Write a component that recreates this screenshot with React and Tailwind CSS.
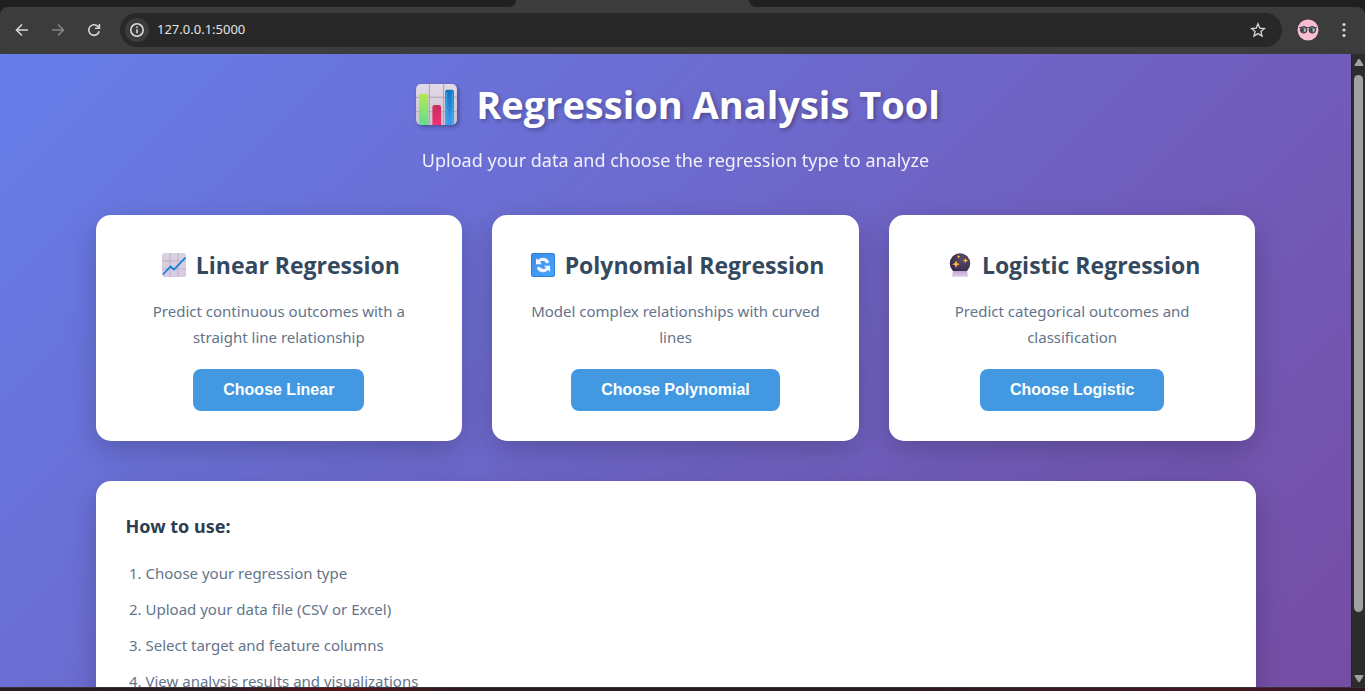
import React from "react";

function BarChartEmoji({ className }) {
  return (
    <svg viewBox="0 0 42 42" className={className} aria-hidden="true">
      <defs>
        <linearGradient id="tile" x1="0" y1="0" x2="0" y2="1">
          <stop offset="0" stopColor="#e2dbe6" />
          <stop offset="1" stopColor="#cdc2d2" />
        </linearGradient>
        <linearGradient id="green" x1="0" y1="0" x2="0" y2="1">
          <stop offset="0" stopColor="#b5e853" />
          <stop offset="1" stopColor="#62dc8c" />
        </linearGradient>
        <linearGradient id="red" x1="0" y1="0" x2="0" y2="1">
          <stop offset="0" stopColor="#c82f5e" />
          <stop offset="1" stopColor="#f52f72" />
        </linearGradient>
        <linearGradient id="blue" x1="0" y1="0" x2="0" y2="1">
          <stop offset="0" stopColor="#0f74c4" />
          <stop offset="1" stopColor="#3f9df0" />
        </linearGradient>
      </defs>
      <rect x="1" y="1" width="40" height="40" rx="5" fill="url(#tile)" />
      <path d="M14 1v40M28 1v40M1 14h40M1 28h40" stroke="#aba2b1" strokeWidth="1" />
      <path d="M4 41V12.500a2 2 0 0 1 2-2h5a2 2 0 0 1 2 2V41z" fill="url(#green)" />
      <path d="M17 41V23.500a2 2 0 0 1 2-2h4.500a2 2 0 0 1 2 2V41z" fill="url(#red)" />
      <path d="M29.500 41V8.500a2 2 0 0 1 2-2H36a2 2 0 0 1 2 2V41z" fill="url(#blue)" />
      <path d="M31 41V9M36.500 41V9" stroke="#48aef5" strokeWidth="0.8" />
    </svg>
  );
}

function TrendEmoji({ className }) {
  return (
    <svg viewBox="0 0 24 24" className={className} aria-hidden="true">
      <defs>
        <linearGradient id="trendTile" x1="0" y1="0" x2="0" y2="1">
          <stop offset="0" stopColor="#d9d2df" />
          <stop offset="1" stopColor="#d9c9e6" />
        </linearGradient>
      </defs>
      <rect width="24" height="24" rx="2.500" fill="url(#trendTile)" />
      <path d="M8 0v24M16 0v24M0 8h24M0 16h24" stroke="#b7abc0" strokeWidth="0.8" />
      <path d="M1 21.500 8.500 13.500l3.500 3L23.500 4.500" fill="none" stroke="#0f7fd6" strokeWidth="1.700" />
    </svg>
  );
}

function CycleEmoji({ className }) {
  return (
    <svg viewBox="0 0 24 24" className={className} aria-hidden="true">
      <defs>
        <linearGradient id="cycleTile" x1="0" y1="0" x2="1" y2="1">
          <stop offset="0" stopColor="#3c8ee8" />
          <stop offset="1" stopColor="#4aa6fb" />
        </linearGradient>
      </defs>
      <rect width="24" height="24" rx="2.500" fill="url(#cycleTile)" />
      <rect x="0.500" y="0.500" width="23" height="23" rx="2.200" fill="none" stroke="#2e7fdb" />
      <path
        d="M5 5.200v6h6L8.900 9.100c1.800-1.600 4.400-1.300 5.700.3.500.7 1.300 1 2 .8 1.200-.3 1.600-1.400 1-2.500C15.300 4 10.100 3.500 7 7.100z"
        fill="#f4f5ff"
      />
      <path
        d="M19 18.800v-6h-6l2.100 2.100c-1.800 1.600-4.400 1.300-5.700-.3-.5-.7-1.300-1-2-.8-1.200.3-1.600 1.400-1 2.500 2.300 3.700 7.500 4.200 10.600.6z"
        fill="#f4f5ff"
      />
    </svg>
  );
}

function CrystalBallEmoji({ className }) {
  return (
    <svg viewBox="0 0 24 24" className={className} aria-hidden="true">
      <defs>
        <radialGradient id="ball" cx="0.6" cy="0.3" r="0.7">
          <stop offset="0" stopColor="#5c4f68" />
          <stop offset="1" stopColor="#35264a" />
        </radialGradient>
        <linearGradient id="stand" x1="0" y1="0" x2="0" y2="1">
          <stop offset="0" stopColor="#b9a4cd" />
          <stop offset="1" stopColor="#e6d3f6" />
        </linearGradient>
      </defs>
      <circle cx="12" cy="10.500" r="10.200" fill="url(#ball)" />
      <path d="M5 18h14l1 5a1 1 0 0 1-1 1H5a1 1 0 0 1-1-1z" fill="url(#stand)" />
      <path
        d="M8 7.500l1.100 2.600 2.600 1.100-2.600 1.100L8 14.900l-1.100-2.600-2.600-1.100 2.600-1.100zM17.500 5l.8 1.800 1.800.8-1.800.8-.8 1.800-.8-1.800-1.800-.8 1.800-.8zM10.700 1.800l.6 1.300 1.300.6-1.300.6-.6 1.300-.6-1.300-1.300-.6 1.300-.6z"
        fill="#fdb43c"
      />
    </svg>
  );
}

function Avatar() {
  return (
    <svg viewBox="0 0 22 22" className="size-[22px]" aria-hidden="true">
      <circle cx="11" cy="11" r="10.500" fill="#f9bdd2" />
      <path d="M2 8.500h18" stroke="#42343a" strokeWidth="0.8" />
      <circle cx="6.700" cy="10.800" r="3.300" fill="#6d868a" stroke="#30272b" strokeWidth="0.9" />
      <circle cx="15.300" cy="10.800" r="3.300" fill="#6d868a" stroke="#30272b" strokeWidth="0.9" />
      <path d="M4 10a3 3 0 0 0 2.500 3.500V8.500zM13 10a3 3 0 0 0 2.300 3.500V8.500z" fill="#33464b" />
      <path d="M7 9.500l2 1.500-1.500 2zM15.800 9.500l2 1.500-1.500 2z" fill="#d8c5cd" />
    </svg>
  );
}

function BrowserBar() {
  return (
    <header className="shrink-0 bg-[#1f2120]">
      <div className="flex h-[7px]" aria-hidden="true">
        <div className="w-[506px]" />
        <div className="flex w-[253px] bg-[#3c3c3c]">
          <div className="w-[10px] rounded-br-[10px] bg-[#1f2120]" />
          <div className="flex-1" />
          <div className="w-[10px] rounded-bl-[10px] bg-[#1f2120]" />
        </div>
      </div>
      <div className="flex h-[47px] items-center rounded-t-lg bg-[#3c3c3c] px-3 pb-px">
        <div className="flex items-center gap-4">
          <button aria-label="Back" className="flex size-5 items-center justify-center text-[#d6d6d6]">
            <svg viewBox="0 0 16 16" className="size-4" fill="none" stroke="currentColor" strokeWidth="1.6">
              <path d="M14 8H3M8 2.500 2.500 8 8 13.500" />
            </svg>
          </button>
          <button aria-label="Forward" className="flex size-5 items-center justify-center text-[#858585]">
            <svg viewBox="0 0 16 16" className="size-4" fill="none" stroke="currentColor" strokeWidth="1.6">
              <path d="M2 8h11M8 2.500 13.500 8 8 13.500" />
            </svg>
          </button>
          <button aria-label="Reload" className="flex size-5 items-center justify-center text-[#d6d6d6]">
            <svg viewBox="0 0 16 16" className="size-4" fill="none" stroke="currentColor" strokeWidth="1.6">
              <path d="M13.200 9.200A5.300 5.300 0 1 1 12 4.500L13.300 6" />
              <path d="M13.400 2v4.300H9.100" />
            </svg>
          </button>
        </div>
        <div className="ml-4 flex h-[34px] flex-1 items-center rounded-full bg-[#282828] pr-4 pl-[5px]">
          <button aria-label="Site information" className="flex size-6 items-center justify-center rounded-full bg-[#3c3c3c] text-[#e0e0e0]">
            <svg viewBox="0 0 16 16" className="size-4" fill="none" stroke="currentColor" strokeWidth="1.5">
              <circle cx="8" cy="8" r="6.200" />
              <path d="M8 7.200v4M8 4.500v1.600" />
            </svg>
          </button>
          <input
            aria-label="Address"
            defaultValue="127.0.0.1:5000"
            className="ml-2 min-w-0 flex-1 bg-transparent font-['Noto_Sans',sans-serif] text-[13px] text-[#e3e3e3] outline-none"
          />
          <button aria-label="Bookmark" className="text-[#d6d6d6]">
            <svg viewBox="0 0 16 16" className="size-4" fill="none" stroke="currentColor" strokeWidth="1.3">
              <path d="M8 1.800l1.800 4.300 4.600.4-3.500 3 1.100 4.600L8 11.600l-4 2.500 1.100-4.600-3.500-3 4.600-.4z" />
            </svg>
          </button>
        </div>
        <button aria-label="Profile" className="ml-[15px]">
          <Avatar />
        </button>
        <button aria-label="Menu" className="ml-4 text-[#d6d6d6]">
          <svg viewBox="0 0 18 18" className="size-[18px]" fill="currentColor">
            <circle cx="9" cy="3.500" r="1.600" />
            <circle cx="9" cy="9" r="1.600" />
            <circle cx="9" cy="14.500" r="1.600" />
          </svg>
        </button>
      </div>
    </header>
  );
}

const options = [
  {
    title: "Linear Regression",
    text: "Predict continuous outcomes with a straight line relationship",
    action: "Choose Linear",
    Icon: TrendEmoji,
  },
  {
    title: "Polynomial Regression",
    text: "Model complex relationships with curved lines",
    action: "Choose Polynomial",
    Icon: CycleEmoji,
  },
  {
    title: "Logistic Regression",
    text: "Predict categorical outcomes and classification",
    action: "Choose Logistic",
    Icon: CrystalBallEmoji,
  },
];

const steps = [
  "Choose your regression type",
  "Upload your data file (CSV or Excel)",
  "Select target and feature columns",
  "View analysis results and visualizations",
];

function OptionCard({ title, text, action, Icon }) {
  return (
    <article className="flex flex-col items-center rounded-[15px] bg-white p-[30px] text-center shadow-[0_10px_30px_rgba(0,0,0,0.2)]">
      <h2 className="flex items-center gap-[10px] pl-1 font-['Open_Sans',sans-serif] text-[23px] leading-10 font-bold whitespace-nowrap text-[#34495e]">
        <Icon className="size-6" />
        {title}
      </h2>
      <p className="mt-[13px] text-[15px] leading-[26px] text-[#64748b]">{text}</p>
      <button className="mt-[19px] h-[42px] rounded-lg bg-[#4299e1] px-[30px] font-['Liberation_Sans',Arial,sans-serif] text-base font-bold text-white">
        {action}
      </button>
    </article>
  );
}

function ScrollBar() {
  return (
    <div className="flex w-[14px] shrink-0 flex-col items-center border-l border-[#1c2a1c] bg-[#2c2c2c] py-1" aria-hidden="true">
      <svg viewBox="0 0 10 9" className="h-[9px] w-[10px]" fill="#a0a0a0">
        <path d="M4 1.500a1.200 1.200 0 0 1 2 0L9.500 7Q9.700 8 8.700 8H1.300Q.3 8 .5 7z" />
      </svg>
      <div className="mt-2 flex flex-1 flex-col pb-[62px]">
        <div className="w-[9px] flex-1 rounded-full bg-[#a0a0a0]" />
      </div>
      <svg viewBox="0 0 10 9" className="h-[9px] w-[10px]" fill="#a0a0a0">
        <path d="M4 7.500a1.200 1.200 0 0 0 2 0L9.500 2Q9.700 1 8.700 1H1.300Q.3 1 .5 2z" />
      </svg>
    </div>
  );
}

export default function App() {
  return (
    <div className="flex h-screen flex-col overflow-hidden">
      <BrowserBar />
      <div className="flex min-h-0 flex-1">
        <div className="min-w-0 flex-1 overflow-hidden">
          <main className="bg-[linear-gradient(135deg,#667eea_0%,#764ba2_100%)] p-5 font-['Noto_Sans','Open_Sans',sans-serif]">
            <div className="mx-auto max-w-[1160px]">
              <div className="text-center text-white">
                <h1 className="flex items-center justify-center gap-[18px] pl-1 font-['Open_Sans',sans-serif] text-[38px] leading-[60px] font-bold [text-shadow:2px_2px_4px_rgba(0,0,0,0.3)]">
                  <BarChartEmoji className="size-[43px] drop-shadow-[2px_2px_2px_rgba(0,0,0,0.3)]" />
                  Regression Analysis Tool
                </h1>
                <p className="mt-[11px] text-[18px] leading-[30px] opacity-90">
                  Upload your data and choose the regression type to analyze
                </p>
              </div>
              <div className="mt-10 grid grid-cols-3 gap-[30px]">
                {options.map((option) => (
                  <OptionCard key={option.title} {...option} />
                ))}
              </div>
              <section className="mt-10 rounded-[15px] bg-white p-[30px] shadow-[0_10px_30px_rgba(0,0,0,0.2)]">
                <h3 className="text-[18px] leading-[30px] font-bold text-[#2c3e50]">How to use:</h3>
                <ol className="mt-[19px] flex list-decimal flex-col gap-[10px] pl-5 text-[15px] leading-[26px] text-[#64748b]">
                  {steps.map((step) => (
                    <li key={step}>{step}</li>
                  ))}
                </ol>
              </section>
            </div>
          </main>
        </div>
        <ScrollBar />
      </div>
      <div className="h-1 shrink-0 border-t border-[#3a3035] bg-[linear-gradient(90deg,#2a1a22_0%,#241c22_15%,#5a1216_25%,#241c22_35%,#241c22_60%,#451620_90%,#2e1820_100%)]" />
    </div>
  );
}
